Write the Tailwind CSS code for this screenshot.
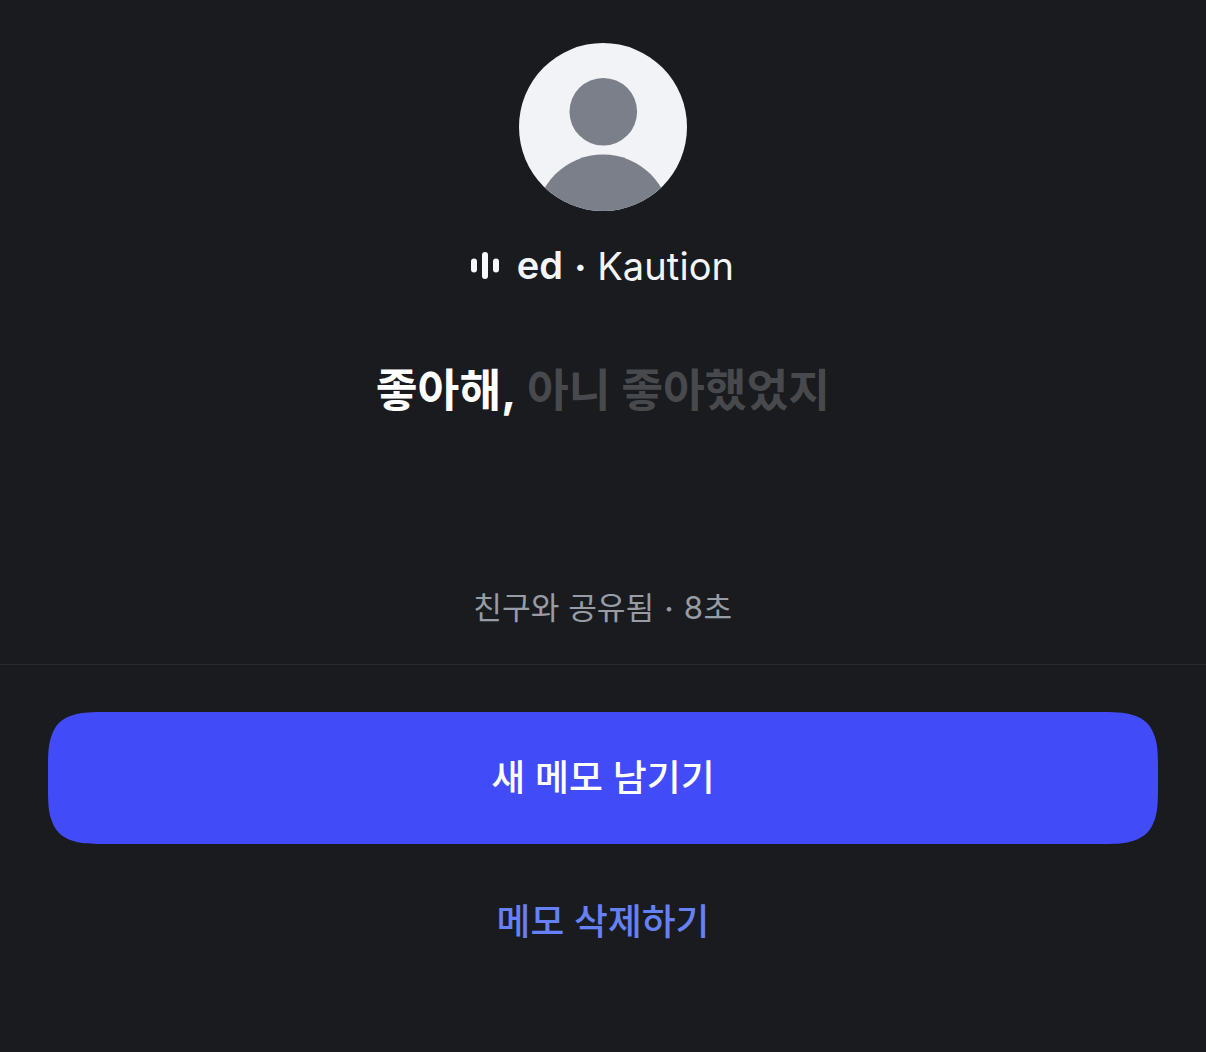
<!DOCTYPE html>
<html lang="ko">
<head>
  <meta charset="UTF-8">
  <title>메모</title>
  <script src="https://cdn.jsdelivr.net/npm/@tailwindcss/browser@4"></script>
</head>
<body class="bg-[#191b1e] h-screen overflow-hidden flex flex-col font-['Inter','Noto_Sans_CJK_KR',sans-serif]">
  <section class="h-[665px] shrink-0 flex flex-col items-center pt-[43px] border-b border-[#282a2e]">
    <svg class="size-[168px] shrink-0" viewBox="0 0 168 168">
      <clipPath id="round"><circle cx="84" cy="84" r="84"/></clipPath>
      <g clip-path="url(#round)">
        <rect width="168" height="168" fill="#f2f3f6"/>
        <circle cx="84.3" cy="68.7" r="33.8" fill="#7a7f8a"/>
        <circle cx="84" cy="179" r="67.5" fill="#7a7f8a"/>
      </g>
    </svg>

    <div class="mt-[26px] h-14 flex items-center text-[38px] leading-none text-[#f4f5f9] pr-px">
      <svg class="w-7 h-[27px] mr-[18px]" viewBox="0 0 28 27" fill="#f8f8fc">
        <rect x="0" y="6.5" width="6" height="14" rx="3"/>
        <rect x="11" y="0" width="6" height="27" rx="3"/>
        <rect x="22" y="6.5" width="6" height="14" rx="3"/>
      </svg>
      <b class="font-semibold">ed</b>
      <span class="ml-[11px] mr-[10.5px] pt-1 font-bold">·</span>
      <span class="pt-px tracking-[0.1px]">Kaution</span>
    </div>

    <p class="mt-[70px] h-14 flex items-center text-[45.4px] leading-none font-bold whitespace-pre text-white">좋아해,<span class="text-[#48494c]"> 아니 좋아했었지</span></p>

    <p class="mt-[170px] h-10 flex items-center text-[31.2px] leading-none text-[#989ca5]">
      <span>친구와 공유됨</span>
      <span class="mx-2.5 pt-0.5 font-medium">·</span>
      <span class="tracking-[0.5px]">8초</span>
    </p>
  </section>

  <section class="px-12 pt-[47px] flex flex-col">
    <button class="relative h-[132px] text-white text-[36.9px] leading-none font-medium">
      <!-- continuous corners -->
      <svg class="absolute inset-0 size-full" viewBox="0 0 1110 132" fill="#414bf8">
        <path d="M61 0H1049C1066.5 0 1075.3 0 1084.8 3C1096.9 6.8 1103.2 13.1 1107 25.2C1110 34.7 1110 43.5 1110 61V71C1110 88.5 1110 97.3 1107 106.8C1103.2 118.9 1096.9 125.2 1084.8 129C1075.3 132 1066.5 132 1049 132H61C43.5 132 34.7 132 25.2 129C13.1 125.2 6.8 118.9 3 106.8C0 97.3 0 88.5 0 71V61C0 43.5 0 34.7 3 25.2C6.8 13.1 13.1 6.8 25.2 3C34.7 0 43.5 0 61 0Z"/>
      </svg>
      <span class="relative">새 메모 남기기</span>
    </button>
    <button class="mt-[48px] h-[60px] text-[#6581f5] text-[36.8px] leading-none font-medium">메모 삭제하기</button>
  </section>
</body>
</html>
